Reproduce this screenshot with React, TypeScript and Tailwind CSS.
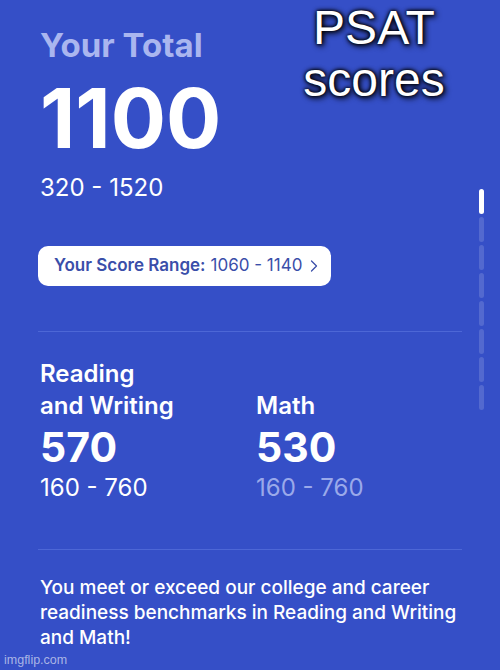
import { ChevronRight } from "lucide-react";

const sans = "font-['Inter','Noto_Sans',sans-serif]";

function ScoreColumn({
  title,
  score,
  range,
  faded,
}: {
  title: React.ReactNode;
  score: string;
  range: string;
  faded?: boolean;
}) {
  return (
    <div className="flex flex-col">
      <div className="h-[64px] flex items-end text-[24px] leading-[32px] font-semibold text-white">
        <div>{title}</div>
      </div>
      <div className="mt-[3px] text-[41px] leading-[44px] font-bold text-white">{score}</div>
      <div className={`mt-[5px] text-[24px] leading-[28px] ${faded ? "text-[#9aa9ea]" : "text-white"}`}>
        {range}
      </div>
    </div>
  );
}

export default function App() {
  return (
    <div className={`relative w-[500px] h-[670px] overflow-hidden bg-[#354fc7] ${sans}`}>
      <div className="pt-[25px] pl-[40px] pr-[38px]">
        <h1 className="text-[33px] leading-[40px] font-bold text-[#aab6ef]">Your Total</h1>
        <div className="mt-[14px] text-[82px] leading-[80px] font-bold text-white">1100</div>
        <div className="mt-[15px] text-[24px] leading-[28px] text-white">320 - 1520</div>

        <button className="mt-[44px] -ml-[2px] h-[40px] w-[293px] flex items-center pl-[16px] rounded-[10px] bg-white text-[17px] text-[#3a4ea9]">
          <span className="font-semibold">Your Score Range:</span>
          <span className="ml-[5px]">1060 - 1140</span>
          <ChevronRight className="ml-[2px] w-[20px] h-[20px]" strokeWidth={1.5} />
        </button>

        <div className="mt-[45px] -ml-[2px] h-px bg-[#4d67d6]" />

        <div className="mt-[26px] grid grid-cols-[216px_1fr]">
          <ScoreColumn
            title={
              <>
                Reading
                <br />
                and Writing
              </>
            }
            score="570"
            range="160 - 760"
          />
          <ScoreColumn title="Math" score="530" range="160 - 760" faded />
        </div>

        <div className="mt-[47px] -ml-[2px] h-px bg-[#4d67d6]" />

        <p className="mt-[25px] w-[430px] text-[19px] leading-[25px] font-medium text-white">
          You meet or exceed our college and career readiness benchmarks in Reading and Writing and Math!
        </p>
      </div>

      {/* page indicator */}
      <div className="absolute left-[479px] top-[189px] flex flex-col gap-[3px]">
        {Array.from({ length: 8 }).map((_, i) => (
          <div
            key={i}
            className={`w-[5px] h-[25px] rounded-full ${i === 0 ? "bg-white" : "bg-white/15"}`}
          />
        ))}
      </div>

      {/* caption */}
      <div className="absolute left-[274px] top-[2px] w-[200px] text-center font-['Liberation_Sans',Arial,sans-serif] text-[48px] leading-[52px] text-white [text-shadow:0_0_3px_#000,0_0_5px_#000,2px_2px_6px_#000]">
        PSAT
        <br />
        scores
      </div>

      <div className="absolute left-[4px] bottom-[2px] font-['Liberation_Sans',Arial,sans-serif] text-[12.5px] leading-[16px] text-[#c9d0ee]/80">
        imgflip.com
      </div>
    </div>
  );
}
